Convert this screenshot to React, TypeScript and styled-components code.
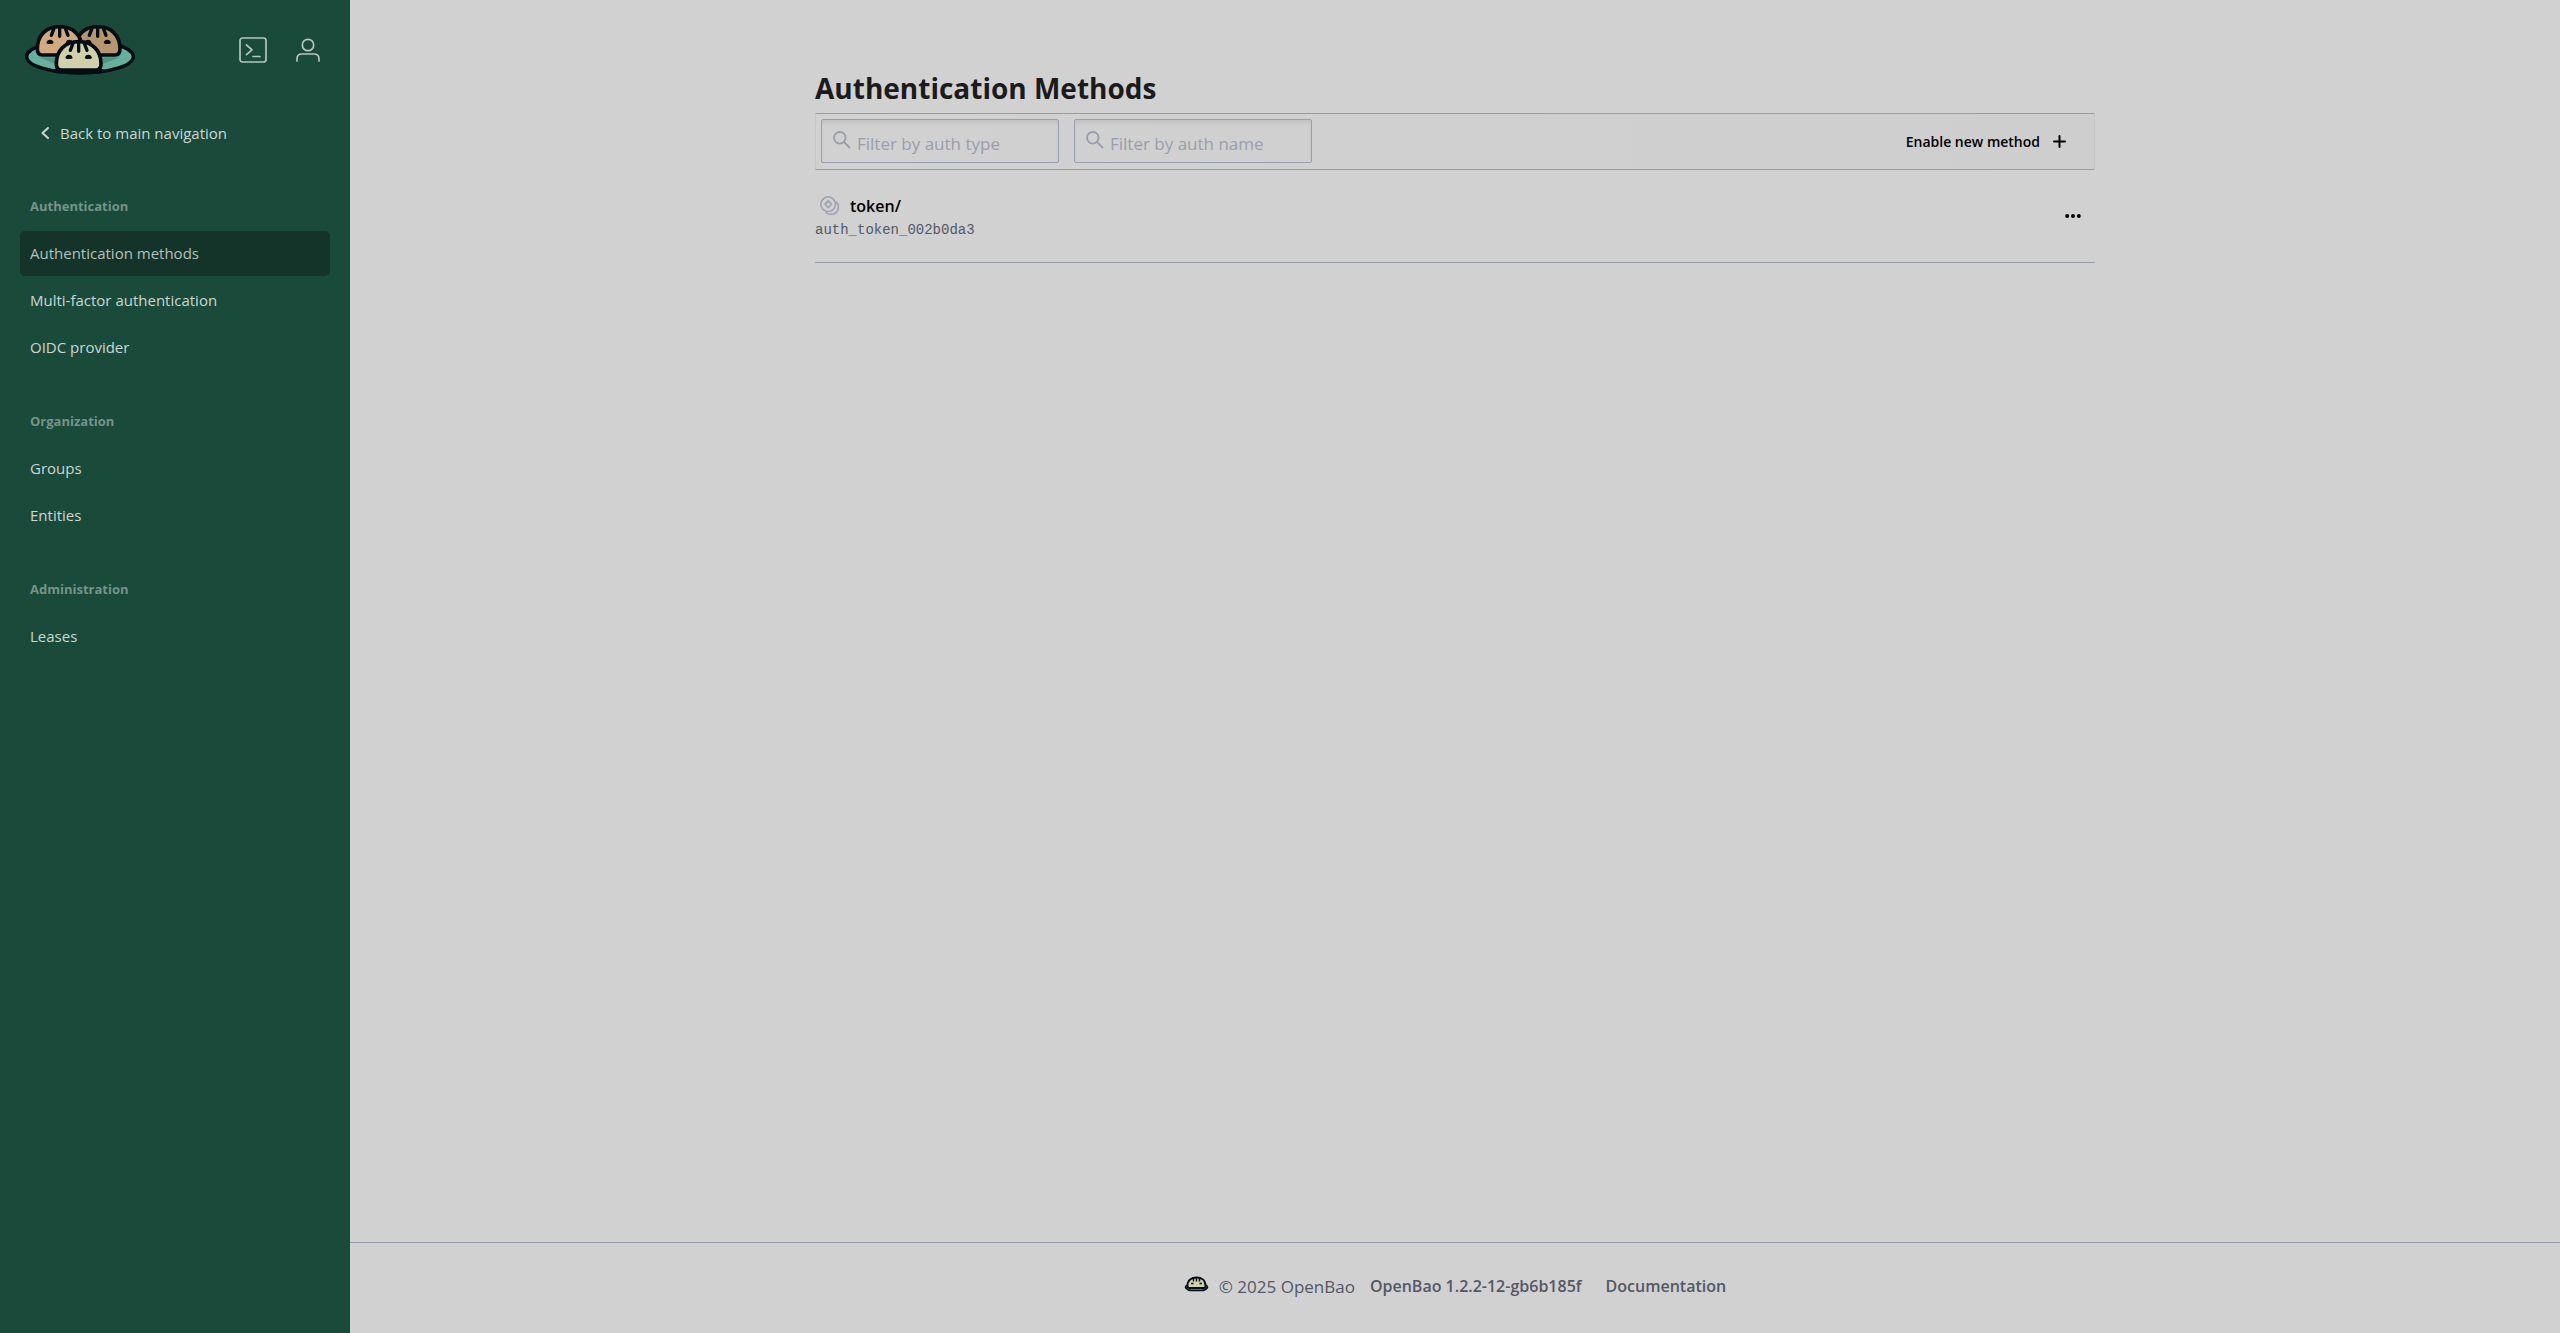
import React from "react";
import styled, { createGlobalStyle } from "styled-components";

const GlobalStyle = createGlobalStyle`
  *, *::before, *::after { box-sizing: border-box; }
  body {
    margin: 0;
    background: #d1d1d1;
    color: #1b1b1b;
    font-family: "Open Sans", "Noto Sans", sans-serif;
    font-size: 17px;
  }
  a { color: inherit; text-decoration: none; }
  button { border: 0; background: none; padding: 0; font: inherit; color: inherit; cursor: pointer; }
  svg { display: block; flex: none; }
`;

const Shell = styled.div`
  display: flex;
  min-height: 100vh;
`;

const Sidebar = styled.aside`
  flex: 0 0 350px;
  padding: 25px 20px;
  background: #194a3a;
  color: #cdd6d2;
  font-size: 15px;
`;

const SidebarHeader = styled.header`
  display: flex;
  align-items: center;
  height: 50px;
  padding-left: 5px;
`;

const HomeLink = styled.a`
  margin-right: auto;
`;

const IconButton = styled.button`
  display: flex;
  align-items: center;
  justify-content: center;
  width: 45px;
  height: 45px;
  margin-left: 10px;
  color: #b5c5bf;
`;

const BackLink = styled.a`
  display: flex;
  align-items: center;
  gap: 11px;
  height: 45px;
  margin-top: 35px;
  padding-left: 21px;
`;

const Section = styled.section`
  margin-top: 29px;
`;

const SectionTitle = styled.h2`
  margin: 0 0 2px;
  padding-left: 10px;
  color: #76928a;
  font-size: 13px;
  font-weight: 700;
  line-height: 45px;
`;

const NavList = styled.ul`
  display: flex;
  flex-direction: column;
  gap: 2px;
  margin: 0;
  padding: 0;
  list-style: none;
`;

const NavLink = styled.a<{ $active?: boolean }>`
  display: block;
  padding-left: 10px;
  border-radius: 5px;
  background: ${(p) => (p.$active ? "#143329" : "transparent")};
  color: ${(p) => (p.$active ? "#b3c0bb" : "inherit")};
  line-height: 45px;
`;

const Page = styled.div`
  display: flex;
  flex: 1;
  flex-direction: column;
  min-width: 0;
`;

const Content = styled.main`
  flex: 1;
  width: 100%;
  max-width: 1280px;
  margin: 0 auto;
  padding-top: 68px;
`;

const Title = styled.h1`
  margin: 0 0 5px;
  font-size: 28px;
  font-weight: 700;
  line-height: 40px;
`;

const Toolbar = styled.div`
  display: flex;
  align-items: flex-start;
  height: 57px;
  padding: 5px 28px 0 5px;
  border: 1px solid #c6c6c8;
  border-top-color: #989ca8;
  border-bottom-color: #989ca8;
  background: linear-gradient(to right, #d1d1d1, #cecece);
`;

const Filter = styled.label`
  position: relative;
  width: 238px;
  margin-right: 15px;
  color: #9a9eab;

  svg {
    position: absolute;
    top: 12px;
    left: 12px;
  }
`;

const FilterInput = styled.input`
  display: block;
  width: 100%;
  height: 44px;
  padding: 4px 10px 0 35px;
  border: 1px solid #9a9eaf;
  border-radius: 2px;
  background: transparent;
  box-shadow: inset 0 4px 4px -1px rgba(0, 0, 0, 0.07);
  color: #1b1b1b;
  font: inherit;

  &::placeholder {
    color: #9a9eab;
    opacity: 1;
  }
`;

const EnableLink = styled.a`
  display: flex;
  align-items: center;
  gap: 13px;
  height: 44px;
  margin-left: auto;
  color: #000;
  font-size: 14px;
  font-weight: 600;
`;

const Row = styled.article`
  display: flex;
  align-items: center;
  justify-content: space-between;
  height: 93px;
  padding-right: 14px;
  border-bottom: 1px solid #989ca8;
`;

const MethodLink = styled.a`
  display: flex;
  align-items: center;
  gap: 10px;
  padding-left: 5px;
  color: #000;
  font-size: 16px;
  font-weight: 600;
  line-height: 28px;

  svg { color: #a0a4ae; }
`;

const Accessor = styled.code`
  display: block;
  color: #525866;
  font-family: "Liberation Mono", monospace;
  font-size: 14px;
  line-height: 20px;
`;

const MoreButton = styled.button`
  display: flex;
  align-items: center;
  height: 24px;
  color: #000;
`;

const Footer = styled.footer`
  display: flex;
  align-items: center;
  justify-content: center;
  height: 91px;
  padding-bottom: 4px;
  border-top: 1px solid #989ca8;
  color: #525866;

  svg { margin-bottom: 5px; }
`;

const Copyright = styled.span`
  margin: 0 15px 0 10px;
`;

const FooterLink = styled.a`
  margin-right: 24px;
  font-size: 16px;
  font-weight: 600;

  &:last-child { margin-right: 0; }
`;

const INK = "#040c14";

function Bun({ x, y, fill }: { x: number; y: number; fill: string }) {
  return (
    <g transform={`translate(${x} ${y})`}>
      <path
        d="M-67 72C-67 30-40 5 0 5S67 30 67 72C67 84 62 90 52 90H-52C-62 90-67 84-67 72Z"
        fill={fill}
        stroke={INK}
        strokeWidth="11"
      />
      <path
        d="M-17 10L-25 31M0 8V34M17 10L25 31"
        fill="none"
        stroke={INK}
        strokeWidth="10"
        strokeLinecap="round"
      />
      <path
        d="M-40 54Q-38 44-29 44T-18 54Q-23 59-29 56Q-35 59-40 54ZM18 54Q20 44 29 44T40 54Q35 59 29 56Q23 59 18 54Z"
        fill={INK}
      />
    </g>
  );
}

function Logo() {
  return (
    <svg width="110" height="50" viewBox="75 75 330 150" role="img" aria-label="OpenBao">
      <ellipse cx="240" cy="170" rx="160" ry="49" fill="#65b19b" stroke={INK} strokeWidth="10" />
      <path d="M118 172L165 192V172ZM362 172L308 192V172Z" fill="#529482" />
      <Bun x={293} y={75} fill="#b5966f" />
      <Bun x={179} y={75} fill="#d2aa82" />
      <Bun x={236} y={120} fill="#d0d0aa" />
      <path d="M162 207H310V218Q236 227 162 218Z" fill={INK} />
    </svg>
  );
}

function FooterLogo() {
  return (
    <svg width="25" height="16" viewBox="0 0 24 16" aria-hidden="true">
      <path d="M4 8.5Q1 9.500 1 11.500Q3 14.500 7 14.500H17Q21 14.500 23 11.500Q23 9.500 20 8.500Z" fill="#55a08c" stroke={INK} strokeWidth="1.500" />
      <path d="M3 9.500C3 4 7 1.500 12 1.500S21 4 21 9.500Q21 12 19 12H5Q3 12 3 9.500Z" fill="#d0d0aa" stroke={INK} strokeWidth="1.800" />
      <path d="M9 2.500V5.500M12 2V5.500M15 2.500V5.500M6.500 7.500H9M15 7.500H17.500" fill="none" stroke={INK} strokeWidth="1.400" />
    </svg>
  );
}

function TerminalIcon() {
  return (
    <svg width="28" height="26" viewBox="0 0 28 26" fill="none" stroke="currentColor" strokeWidth="1.700" strokeLinecap="round" strokeLinejoin="round">
      <rect x="1" y="1" width="26" height="24" rx="2.500" />
      <path d="M7.500 8L13 12.800L7.500 17.600M14 19.500H21" />
    </svg>
  );
}

function UserIcon() {
  return (
    <svg width="24" height="24" viewBox="0 0 24 24" fill="none" stroke="currentColor" strokeWidth="1.700" strokeLinecap="round">
      <circle cx="12" cy="7" r="5.700" />
      <path d="M1 23V21Q1 16 6 16H18Q23 16 23 21V23" />
    </svg>
  );
}

function ChevronIcon() {
  return (
    <svg width="8" height="12" viewBox="0 0 8 12" fill="none" stroke="currentColor" strokeWidth="2" strokeLinecap="round" strokeLinejoin="round">
      <path d="M7 1L1.500 6L7 11" />
    </svg>
  );
}

function SearchIcon() {
  return (
    <svg width="18" height="18" viewBox="0 0 18 18" fill="none" stroke="currentColor" strokeWidth="1.900">
      <circle cx="6.800" cy="6.800" r="5.800" />
      <path d="M10.900 10.900L17 17" />
    </svg>
  );
}

function PlusIcon() {
  return (
    <svg width="13" height="13" viewBox="0 0 13 13" stroke="currentColor" strokeWidth="2" strokeLinecap="round">
      <path d="M6.500 1V12M1 6.500H12" />
    </svg>
  );
}

function TokenIcon() {
  return (
    <svg width="20" height="20" viewBox="0 0 20 20" fill="none" stroke="currentColor" strokeWidth="1.700" strokeLinejoin="round">
      <circle cx="8.200" cy="8.200" r="7.300" />
      <path d="M8.200 4.900L11.500 8.200L8.200 11.500L4.900 8.200Z" />
      <path d="M16.300 5.800A7.300 7.300 0 1 1 5.800 16.300" />
    </svg>
  );
}

function MoreIcon() {
  return (
    <svg width="16" height="4" viewBox="0 0 16 4" fill="currentColor">
      <circle cx="2.200" cy="2" r="2" />
      <circle cx="8" cy="2" r="2" />
      <circle cx="13.800" cy="2" r="2" />
    </svg>
  );
}

const sections = [
  { title: "Authentication", items: ["Authentication methods", "Multi-factor authentication", "OIDC provider"] },
  { title: "Organization", items: ["Groups", "Entities"] },
  { title: "Administration", items: ["Leases"] },
];

const filters = ["Filter by auth type", "Filter by auth name"];

export default function App() {
  return (
    <Shell>
      <GlobalStyle />
      <Sidebar>
        <SidebarHeader>
          <HomeLink href="#"><Logo /></HomeLink>
          <IconButton type="button" aria-label="Console"><TerminalIcon /></IconButton>
          <IconButton type="button" aria-label="User menu"><UserIcon /></IconButton>
        </SidebarHeader>
        <BackLink href="#"><ChevronIcon />Back to main navigation</BackLink>
        <nav>
          {sections.map((section) => (
            <Section key={section.title}>
              <SectionTitle>{section.title}</SectionTitle>
              <NavList>
                {section.items.map((item) => (
                  <li key={item}>
                    <NavLink href="#" $active={item === "Authentication methods"}>{item}</NavLink>
                  </li>
                ))}
              </NavList>
            </Section>
          ))}
        </nav>
      </Sidebar>
      <Page>
        <Content>
          <Title>Authentication Methods</Title>
          <Toolbar>
            {filters.map((label) => (
              <Filter key={label}>
                <SearchIcon />
                <FilterInput type="text" placeholder={label} aria-label={label} />
              </Filter>
            ))}
            <EnableLink href="#">Enable new method<PlusIcon /></EnableLink>
          </Toolbar>
          <Row>
            <div>
              <MethodLink href="#"><TokenIcon />token/</MethodLink>
              <Accessor>auth_token_002b0da3</Accessor>
            </div>
            <MoreButton type="button" aria-label="Manage token/"><MoreIcon /></MoreButton>
          </Row>
        </Content>
        <Footer>
          <FooterLogo />
          <Copyright>© 2025 OpenBao</Copyright>
          <FooterLink href="#">OpenBao 1.2.2-12-gb6b185f</FooterLink>
          <FooterLink href="#">Documentation</FooterLink>
        </Footer>
      </Page>
    </Shell>
  );
}
